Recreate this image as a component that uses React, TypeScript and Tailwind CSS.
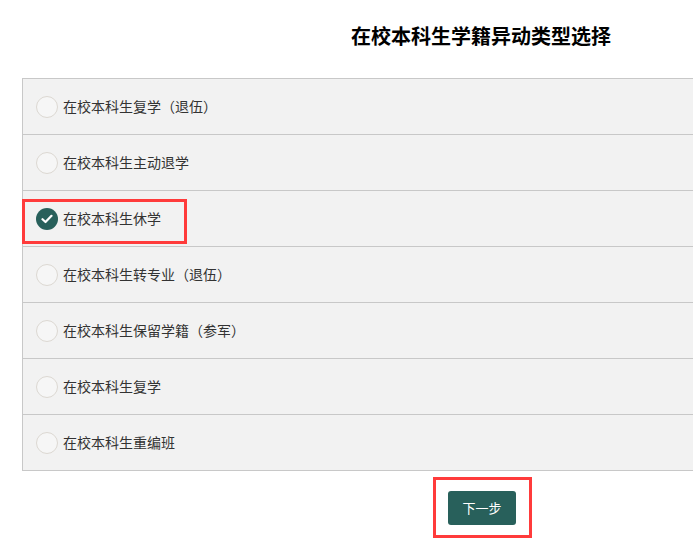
import { useState } from 'react';

const OPTIONS = [
  '在校本科生复学（退伍）',
  '在校本科生主动退学',
  '在校本科生休学',
  '在校本科生转专业（退伍）',
  '在校本科生保留学籍（参军）',
  '在校本科生复学',
  '在校本科生重编班',
];

export default function App() {
  const [picked, setPicked] = useState(2);

  return (
    <div
      className="w-[693px] h-[543px] overflow-hidden bg-white text-[#333]"
      style={{ fontFamily: '"Microsoft YaHei", "Noto Sans CJK SC", sans-serif' }}
    >
      <div className="ml-[22px] w-[918px]">
        <h1 className="h-[78px] pt-[22px] text-center text-[20px] leading-[28px] font-bold text-black">
          在校本科生学籍异动类型选择
        </h1>

        <div className="border-l border-t border-[#c8c8c8] bg-[#f2f2f2]">
          {OPTIONS.map((label, i) => (
            <div
              key={label}
              onClick={() => setPicked(i)}
              className="relative flex h-[56px] cursor-pointer items-center border-b border-[#c8c8c8] pl-[13px]"
            >
              {picked === i ? (
                <span className="flex h-[22px] w-[22px] items-center justify-center rounded-full bg-[#28605b]">
                  <svg width="12" height="10" viewBox="0 0 12 10" fill="none">
                    <path d="M1.5 5.2 4.5 8 10.5 1.8" stroke="#fff" strokeWidth="2.2" strokeLinecap="round" strokeLinejoin="round" />
                  </svg>
                </span>
              ) : (
                <span className="h-[22px] w-[22px] rounded-full border border-[#dcd8d2] bg-[#f6f6f6]" />
              )}
              <span className="ml-[5px] text-[14px]">{label}</span>
              {picked === i && (
                <span className="absolute left-[-1px] top-[8px] h-[45px] w-[165px] border-[3px] border-[#ff3b3b]" />
              )}
            </div>
          ))}
        </div>

        <div className="flex justify-center pt-[20px] pl-[2px]">
          <div className="relative">
            <button
              type="button"
              className="h-[34px] w-[68px] rounded-[3px] bg-[#28605b] text-[13px] text-white"
            >
              下一步
            </button>
            <span className="absolute left-[-15px] top-[-14px] h-[61px] w-[99px] border-[3px] border-[#ff3b3b]" />
          </div>
        </div>
      </div>
    </div>
  );
}
